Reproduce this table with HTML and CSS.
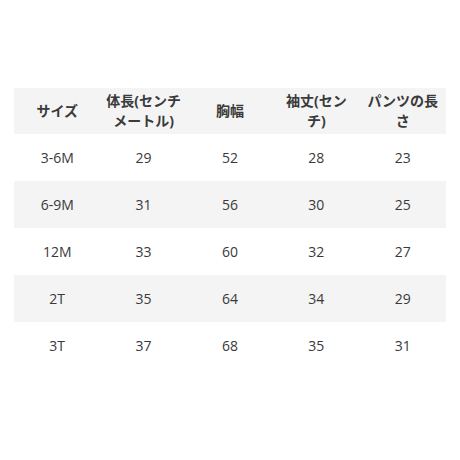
FILE: index.html
```html
<!DOCTYPE html>
<html lang="ja">
<head>
<meta charset="utf-8">
<link rel="stylesheet" href="styles.css">
</head>
<body>
<div class="wrap">
<table class="size-table">
  <thead>
    <tr><th>サイズ</th><th>体長(センチメートル)</th><th>胸幅</th><th>袖丈(センチ)</th><th>パンツの長さ</th></tr>
  </thead>
  <tbody>
    <tr><td>3-6M</td><td>29</td><td>52</td><td>28</td><td>23</td></tr>
    <tr><td>6-9M</td><td>31</td><td>56</td><td>30</td><td>25</td></tr>
    <tr><td>12M</td><td>33</td><td>60</td><td>32</td><td>27</td></tr>
    <tr><td>2T</td><td>35</td><td>64</td><td>34</td><td>29</td></tr>
    <tr><td>3T</td><td>37</td><td>68</td><td>35</td><td>31</td></tr>
  </tbody>
</table>
</div>
</body>
</html>
```

FILE: styles.css
```css
html, body {
  margin: 0;
  padding: 0;
  background: #ffffff;
}
.wrap {
  padding: 88px 14px 0 14px;
}
.size-table {
  width: 432px;
  border-collapse: collapse;
  table-layout: fixed;
  font-family: "Open Sans", "Noto Sans CJK JP", sans-serif;
  font-size: 14px;
  color: #3a3a3a;
}
.size-table th,
.size-table td {
  text-align: center;
  vertical-align: middle;
  padding: 0 4px;
  line-height: 20px;
}
.size-table th {
  height: 46px;
  font-weight: 700;
  background: #f4f4f4;
}
.size-table td {
  height: 47px;
  font-weight: 400;
}
.size-table tbody tr:nth-child(even) td {
  background: #f4f4f4;
}
```
